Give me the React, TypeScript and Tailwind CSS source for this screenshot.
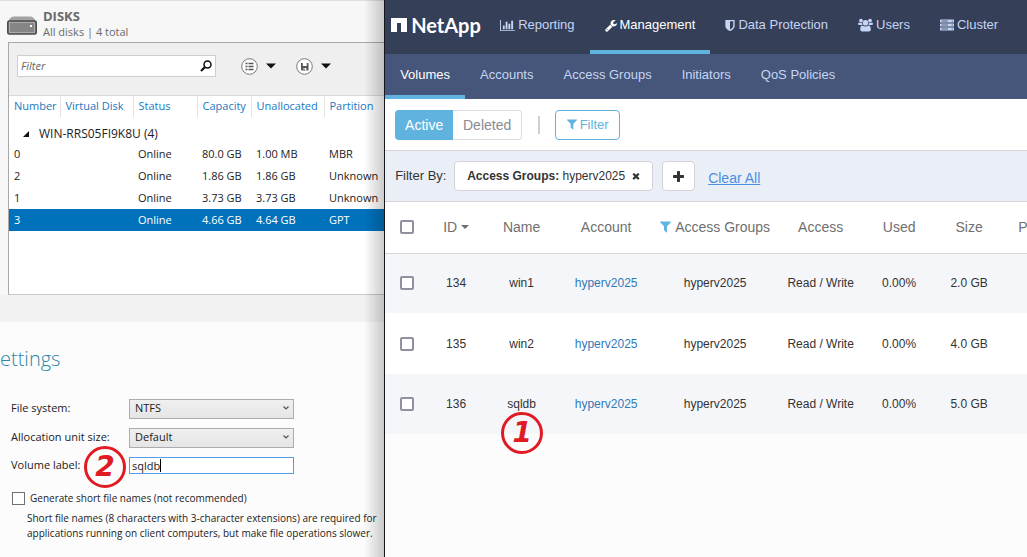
import type { ReactNode } from "react";

const ICON_PATHS = {
  chart:
    "M640 896v512h-256v-512h256zm384-512v1024h-256v-1024h256zm1024 1152v128h-2048v-1536h128v1408h1920zm-640-896v768h-256v-768h256zm384-384v1152h-256v-1152h256z",
  wrench:
    "M448 1472q0-26-19-45t-45-19-45 19-19 45 19 45 45 19 45-19 19-45zm644-420l-682 682q-37 37-90 37-52 0-91-37l-106-108q-38-36-38-90 0-53 38-91l681-681q39 98 114.500 173.500t173.500 114.500zm634-435q0 39-23 106-47 134-164.500 217.500t-258.500 83.500q-185 0-316.500-131.500t-131.500-316.500 131.500-316.500 316.500-131.500q58 0 121.500 16.500t107.500 46.500q16 11 16 28t-16 28l-293 169v224l193 107q5-3 79-48.500t135.500-81 70.500-35.500q15 0 23.500 10t8.500 25z",
  shield:
    "M1344 960v-640h-448v1137q119-63 213-137 235-184 235-360zm192-768v768q0 86-33.500 170.500t-83 150-118 127.500-126.500 103-121 77.500-89.500 49.500-42.500 20q-12 6-26 6t-26-6q-16-7-42.500-20t-89.500-49.500-121-77.500-126.500-103-118-127.500-83-150-33.500-170.500v-768q0-26 19-45t45-19h1152q26 0 45 19t19 45z",
  filter:
    "M1595 295q17 41-14 70l-493 493v742q0 42-39 59-13 5-25 5-27 0-45-19l-256-256q-19-19-19-45v-486l-493-493q-31-29-14-70 17-39 59-39h1280q42 0 59 39z",
  plus: "M1600 736v192q0 40-28 68t-68 28h-416v416q0 40-28 68t-68 28h-192q-40 0-68-28t-28-68v-416h-416q-40 0-68-28t-28-68v-192q0-40 28-68t68-28h416v-416q0-40 28-68t68-28h192q40 0 68 28t28 68v416h416q40 0 68 28t28 68z",
  close:
    "M1490 1322q0 40-28 68l-136 136q-28 28-68 28t-68-28l-294-294-294 294q-28 28-68 28t-68-28l-136-136q-28-28-28-68t28-68l294-294-294-294q-28-28-28-68t28-68l136-136q28-28 68-28t68 28l294 294 294-294q28-28 68-28t68 28l136 136q28 28 28 68t-28 68l-294 294 294 294q28 28 28 68z",
};

function Glyph({ path, box, className }: { path: string; box: string; className: string }) {
  return (
    <svg viewBox={box} className={className} fill="currentColor" aria-hidden="true">
      <path d={path} />
    </svg>
  );
}

function UsersIcon() {
  return (
    <svg viewBox="0 0 15 14" className="h-[14px] w-[15px]" fill="currentColor" aria-hidden="true">
      <circle cx="3" cy="2.6" r="1.9" />
      <circle cx="12" cy="2.6" r="1.9" />
      <path d="M0 6.2Q0 4.5 1 4.5Q2.6 5.4 3.9 4.9Q4 6.3 4.8 7H1.4Q0 7 0 6.2ZM15 6.2Q15 4.500 14 4.500Q12.400 5.400 11.100 4.900Q11 6.300 10.200 7H13.600Q15 7 15 6.200Z" />
      <circle cx="7.5" cy="4.700" r="2.800" />
      <path d="M2.200 11.500Q2.200 7.500 4.500 7.400Q7.500 9.500 10.500 7.400Q12.800 7.500 12.800 11.500Q12.800 13.500 10.800 13.500H4.200Q2.200 13.500 2.200 11.500Z" />
    </svg>
  );
}

function ServerIcon() {
  return (
    <svg viewBox="0 0 14 12" className="h-3 w-[14px]" aria-hidden="true">
      {[0.5, 4.5, 8.5].map((y) => (
        <g key={y}>
          <rect x="0" y={y} width="14" height="3" rx="0.5" fill="currentColor" />
          <path d={`M1.500 ${y + 1.5}H8`} stroke="#353f58" strokeWidth="0.8" />
          <circle cx="12.200" cy={y + 1.5} r="0.6" fill="#353f58" />
        </g>
      ))}
    </svg>
  );
}

function DiskIcon() {
  return (
    <svg viewBox="0 0 30 19" className="h-[19px] w-[30px]" aria-hidden="true">
      <path d="M1 6Q3 0.500 7 0.500H23Q27 0.500 29 6Z" fill="#a3a3a3" />
      <rect x="0.800" y="5" width="28.400" height="13" rx="1.500" fill="#858585" stroke="#4e4e4e" strokeWidth="1.600" />
      <rect x="2.500" y="6.500" width="25" height="10" fill="none" stroke="#bdbdbd" strokeWidth="0.700" />
      <rect x="23" y="9" width="2" height="2" fill="#fff" />
    </svg>
  );
}

function Caret() {
  return (
    <svg viewBox="0 0 10 6" className="h-[6px] w-[10px]" aria-hidden="true">
      <path d="M0 0.500H10L5 5.500Z" fill="#111" />
    </svg>
  );
}

function Step({ n, place }: { n: number; place: string }) {
  return (
    <span
      className={`absolute flex size-[42px] items-center justify-center rounded-full border-[3px] border-[#e01b24] font-['DejaVu_Sans',sans-serif] text-[28px] leading-none font-bold text-[#e01b24] italic ${place}`}
    >
      {n}
    </span>
  );
}

const DISKS = [
  ["0", "", "Online", "80.0 GB", "1.00 MB", "MBR"],
  ["2", "", "Online", "1.86 GB", "1.86 GB", "Unknown"],
  ["1", "", "Online", "3.73 GB", "3.73 GB", "Unknown"],
  ["3", "", "Online", "4.66 GB", "4.64 GB", "GPT"],
];

function DisksSection() {
  return (
    <section className="border-t border-[#dedede] bg-[#f7f7f7]">
      <header className="flex h-[41px] items-center gap-[6px] pl-[7px] text-[#6a6a6a]">
        <div className="pt-2">
          <DiskIcon />
        </div>
        <div className="pt-1 leading-4">
          <h1 className="text-[13px] leading-4 font-bold">DISKS</h1>
          <p className="text-[11px] leading-4">All disks | 4 total</p>
        </div>
      </header>
      <div className="ml-2 h-[253px] border-t border-b border-l border-t-[#a8a8a8] border-b-[#c8c8c8] border-l-[#a8a8a8] bg-white">
        <div className="flex h-[52px] items-start bg-[#efefef] pt-3 pl-2">
          <div className="flex h-[22px] w-[199px] items-center border border-[#cfcfcf] bg-white pr-[3px]">
            <input
              aria-label="Filter disks"
              placeholder="Filter"
              className="min-w-0 flex-1 pl-[3px] text-[11px] italic outline-none placeholder:text-[#666]"
            />
            <svg viewBox="0 0 12 12" className="size-3" fill="none" stroke="#111" aria-hidden="true">
              <circle cx="7.500" cy="4.500" r="3.500" strokeWidth="1.500" />
              <path d="M5 7L1 11" strokeWidth="2.200" />
            </svg>
          </div>
          <button aria-label="View options" className="ml-[25px] flex h-[22px] items-center gap-2">
            <svg viewBox="0 0 17 17" className="size-[17px]" aria-hidden="true">
              <circle cx="8.500" cy="8.500" r="7.800" fill="#fff" stroke="#777" />
              <path
                d="M4.500 5.500H6.500M7.500 5.500H12.500M4.500 8.500H6.500M7.500 8.500H12.500M4.500 11.500H6.500M7.500 11.500H12.500"
                stroke="#555"
                strokeWidth="1.700"
              />
            </svg>
            <Caret />
          </button>
          <button aria-label="Save options" className="ml-5 flex h-[22px] items-center gap-2">
            <svg viewBox="0 0 17 17" className="size-[17px]" aria-hidden="true">
              <circle cx="8.500" cy="8.500" r="7.800" fill="#fff" stroke="#777" />
              <path d="M5 5H12.500V12.500H5.800L5 11.700Z" fill="#555" />
              <path d="M6.800 5H10.800V8H6.800ZM7.300 10H10.300V12.500H7.300Z" fill="#fff" />
              <rect x="7.500" y="10.500" width="1.200" height="2" fill="#555" />
            </svg>
            <Caret />
          </button>
        </div>
        <table className="w-full table-fixed border-collapse text-left text-[11px] whitespace-nowrap text-[#222]">
          <colgroup>
            <col className="w-[51px]" />
            <col className="w-[73px]" />
            <col className="w-[64px]" />
            <col className="w-[54px]" />
            <col className="w-[73px]" />
            <col />
          </colgroup>
          <thead>
            <tr className="h-[21px] border-t border-[#d9d9d9] text-[#1979c0]">
              {["Number", "Virtual Disk", "Status", "Capacity", "Unallocated", "Partition"].map((h, i) => (
                <th key={h} className={`p-0 font-normal ${i ? "border-l border-[#e2e2e2] pl-[5px]" : "pl-[5px]"}`}>
                  {h}
                </th>
              ))}
            </tr>
          </thead>
          <tbody>
            <tr className="h-[26px]">
              <td colSpan={6} className="p-0 pt-2 pl-[14px] text-xs">
                <span className="flex items-center gap-[10px]">
                  <svg viewBox="0 0 6 6" className="size-[6px]" aria-hidden="true">
                    <path d="M6 0V6H0Z" fill="#111" />
                  </svg>
                  WIN-RRS05FI9K8U (4)
                </span>
              </td>
            </tr>
            {DISKS.map((row) => (
              <tr key={row[0]} className={`h-[22px] ${row[0] === "3" ? "bg-[#0072bc] text-white" : ""}`}>
                {row.map((cell, i) => (
                  <td key={i} className="p-0 pt-px pl-[5px]">
                    {cell}
                  </td>
                ))}
              </tr>
            ))}
          </tbody>
        </table>
      </div>
    </section>
  );
}

function SelectRow({ id, label, value }: { id: string; label: string; value: string }) {
  return (
    <div className="flex h-[29px] items-center">
      <label htmlFor={id} className="w-[118px]">
        {label}
      </label>
      <div className="relative">
        <select
          id={id}
          className="h-5 w-[165px] appearance-none border border-[#acacac] bg-linear-to-b from-[#f0f0f0] to-[#e5e5e5] pl-[5px]"
        >
          <option>{value}</option>
        </select>
        <svg viewBox="0 0 6 4" className="pointer-events-none absolute top-[7px] right-[5px] h-1 w-[6px]" aria-hidden="true">
          <path d="M0.500 0.500L3 3L5.500 0.500" fill="none" stroke="#555" strokeWidth="1.200" />
        </svg>
      </div>
    </div>
  );
}

function SettingsSection() {
  return (
    <section className="flex-1 border-t-[27px] border-[#f2f2f2] bg-[#fcfcfc] text-[11px] text-[#222]">
      <h2 className="pt-[21px] text-xl leading-8 font-light text-[#2d87a5]">ettings</h2>
      <div className="pt-[19px] pl-[11px]">
        <SelectRow id="fs" label="File system:" value="NTFS" />
        <SelectRow id="unit" label="Allocation unit size:" value="Default" />
        <div className="relative flex h-[27px] items-center">
          <label htmlFor="label" className="w-[118px]">
            Volume label:
          </label>
          <div className="relative">
            <input
              id="label"
              defaultValue="sqldb"
              className="block h-[17px] w-[165px] border border-[#569de5] bg-white pl-[2px] outline-none"
            />
            <span className="absolute top-[2px] left-[31px] h-[13px] w-px bg-black" />
          </div>
          <Step n={2} place="top-[-6px] left-[73px]" />
        </div>
        <label className="mt-[11px] flex h-4 items-center gap-[5px] pl-px text-[10px]">
          <input type="checkbox" className="size-[13px] appearance-none border border-[#707070] bg-white" />
          Generate short file names (not recommended)
        </label>
        <p className="mt-[5px] pl-4 text-[10px] leading-[15px] whitespace-nowrap">
          Short file names (8 characters with 3-character extensions) are required for
          <br />
          applications running on client computers, but make file operations slower.
        </p>
      </div>
    </section>
  );
}

const NAV: { label: string; icon: ReactNode; active?: boolean }[] = [
  { label: "Reporting", icon: <Glyph path={ICON_PATHS.chart} box="0 0 2048 1792" className="h-[13px] w-[15px]" /> },
  {
    label: "Management",
    icon: <Glyph path={ICON_PATHS.wrench} box="64 0 1664 1792" className="h-[13px] w-3" />,
    active: true,
  },
  {
    label: "Data Protection",
    icon: <Glyph path={ICON_PATHS.shield} box="256 0 1280 1792" className="h-[13px] w-[10px]" />,
  },
  { label: "Users", icon: <UsersIcon /> },
  { label: "Cluster", icon: <ServerIcon /> },
];

const SUBNAV = ["Volumes", "Accounts", "Access Groups", "Initiators", "QoS Policies"];

const COLUMNS = ["ID", "Name", "Account", "Access Groups", "Access", "Used", "Size"];

const VOLUMES = [
  { id: "134", name: "win1", size: "2.0 GB" },
  { id: "135", name: "win2", size: "4.0 GB" },
  { id: "136", name: "sqldb", size: "5.0 GB" },
];

function Check({ label }: { label: string }) {
  return (
    <input
      type="checkbox"
      aria-label={label}
      className="block size-[14px] appearance-none rounded-[2px] border-2 border-[#9090a0] bg-white"
    />
  );
}

function VolumesTable() {
  return (
    <table className="w-full table-fixed border-collapse text-center whitespace-nowrap text-[#333]">
      <colgroup>
        <col className="w-[44px]" />
        <col className="w-[54px]" />
        <col className="w-[77px]" />
        <col className="w-[92px]" />
        <col className="w-[126px]" />
        <col className="w-[85px]" />
        <col className="w-[72px]" />
        <col className="w-[68px]" />
        <col />
      </colgroup>
      <thead>
        <tr className="h-[51px] border-b border-[#d6d6d6] bg-white text-sm text-[#6f6f6f]">
          <th className="p-0 pl-[15px]">
            <Check label="Select all volumes" />
          </th>
          {COLUMNS.map((c) => (
            <th key={c} className="p-0 font-normal">
              <span className="inline-flex items-center gap-1">
                {c === "Access Groups" && (
                  <Glyph path={ICON_PATHS.filter} box="192 192 1408 1536" className="h-3 w-[11px] text-[#5fb4e0]" />
                )}
                {c}
                {c === "ID" && (
                  <svg viewBox="0 0 8 4" className="h-1 w-2" fill="currentColor" aria-hidden="true">
                    <path d="M0 0H8L4 4Z" />
                  </svg>
                )}
              </span>
            </th>
          ))}
          <th className="p-0 pl-[15px] text-left font-normal">P</th>
        </tr>
      </thead>
      <tbody className="text-xs">
        {VOLUMES.map((v) => (
          <tr key={v.id} className="h-[60px] odd:bg-[#f5f6fa] even:h-[61px] even:bg-white">
            <td className="p-0 pl-[15px]">
              <Check label={`Select ${v.name}`} />
            </td>
            <td className="p-0">{v.id}</td>
            <td className="p-0">
              <span className="relative">
                {v.name}
                {v.name === "sqldb" && <Step n={1} place="top-[15px] left-[-6px]" />}
              </span>
            </td>
            <td className="p-0">
              <a href="#account" className="text-[#337ab7]">
                hyperv2025
              </a>
            </td>
            <td className="p-0">hyperv2025</td>
            <td className="p-0">Read / Write</td>
            <td className="p-0">0.00%</td>
            <td className="p-0">{v.size}</td>
            <td className="p-0" />
          </tr>
        ))}
      </tbody>
    </table>
  );
}

function StoragePane() {
  return (
    <main className="min-w-0 flex-1 overflow-hidden bg-[#fcfcfc] font-['Liberation_Sans',Arial,sans-serif]">
      <header className="flex h-[54px] bg-[#353f58] pl-[6px]">
        <a href="#home" className="flex w-[94px] items-center gap-1 pb-1 text-white">
          <svg viewBox="0 0 16 14" className="h-[14px] w-4 shrink-0" aria-hidden="true">
            <path d="M0 0H16V14H10V5H6V14H0Z" fill="#fff" />
          </svg>
          <span className="font-[Lato,sans-serif] text-xl leading-6 font-bold">NetApp</span>
        </a>
        <nav className="flex text-[13px] whitespace-nowrap">
          {NAV.map((n) => (
            <a
              key={n.label}
              href={`#${n.label}`}
              className={`flex items-center gap-[3px] border-b-4 px-[15px] ${
                n.active ? "border-[#60b3de] text-white" : "border-transparent text-[#c5d5f5]"
              }`}
            >
              {n.icon}
              {n.label}
            </a>
          ))}
        </nav>
      </header>
      <nav className="flex h-[45px] bg-[#46557a] text-[13px] whitespace-nowrap">
        {SUBNAV.map((s, i) => (
          <a
            key={s}
            href={`#${s}`}
            className={`flex items-center border-b-4 px-[15px] ${
              i === 0 ? "border-[#60b3de] text-white" : "border-transparent text-[#c5d5f5]"
            }`}
          >
            {s}
          </a>
        ))}
      </nav>
      <div className="flex h-[52px] items-center border-b border-[#d6d6d6] bg-white pl-[10px]">
        <div className="flex h-[30px] text-sm">
          <button className="w-[58px] rounded-l bg-[#60b3de] text-white">Active</button>
          <button className="w-[69px] rounded-r border border-l-0 border-[#dcdce0] text-[#8a8a92]">Deleted</button>
        </div>
        <span className="ml-4 h-[18px] w-[2px] bg-[#cfcfcf]" />
        <button className="ml-[15px] flex h-[30px] w-[65px] items-center justify-center gap-[3px] rounded border border-[#60b3de] text-[13px] text-[#60b3de]">
          <Glyph path={ICON_PATHS.filter} box="192 192 1408 1536" className="h-[11px] w-[10px]" />
          Filter
        </button>
      </div>
      <div className="flex h-[51px] items-center border-b border-[#d6d6d6] bg-[#eaeff7] pl-[10px] text-[13px] text-[#333]">
        <span className="w-[59px]">Filter By:</span>
        <div className="flex h-[30px] w-[199px] items-center rounded border border-[#d4d4d8] bg-white pl-3 text-xs whitespace-pre">
          <b>Access Groups:</b> hyperv2025
          <button aria-label="Remove filter" className="ml-[7px]">
            <Glyph path={ICON_PATHS.close} box="192 192 1408 1408" className="size-2" />
          </button>
        </div>
        <button
          aria-label="Add filter"
          className="ml-[9px] flex h-[30px] w-[33px] items-center justify-center rounded border border-[#d4d4d8] bg-white"
        >
          <Glyph path={ICON_PATHS.plus} box="192 128 1408 1408" className="size-[11px]" />
        </button>
        <a href="#clear" className="ml-[13px] pt-1 text-sm text-[#4a90e2] underline">
          Clear All
        </a>
      </div>
      <VolumesTable />
    </main>
  );
}

export default function App() {
  return (
    <div className="flex min-h-screen overflow-hidden">
      <div className="relative flex w-3/8 shrink-0 flex-col overflow-hidden border-r border-[#15171c] font-['Open_Sans','Noto_Sans',sans-serif]">
        <DisksSection />
        <SettingsSection />
        <div className="pointer-events-none absolute inset-y-0 right-0 w-5 bg-linear-to-r from-transparent to-black/20" />
      </div>
      <StoragePane />
    </div>
  );
}
